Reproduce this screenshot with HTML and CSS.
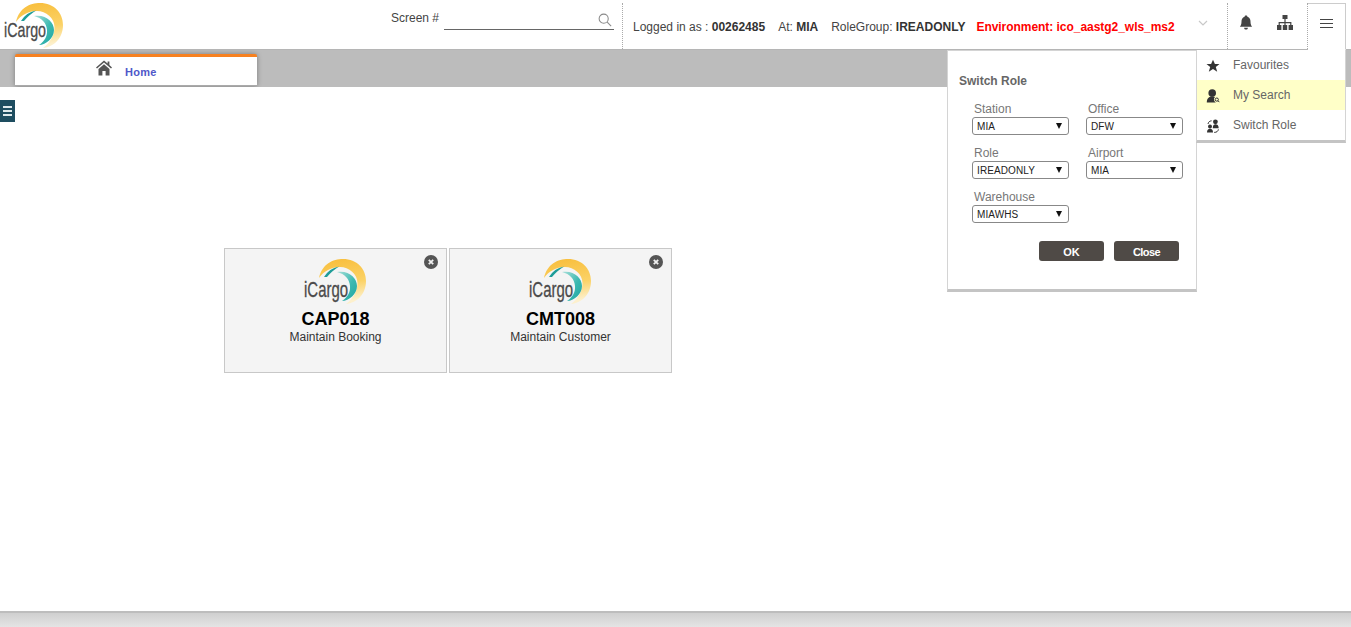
FILE: index.html
```html
<!DOCTYPE html>
<html lang="en">
<head>
<meta charset="utf-8">
<title>iCargo</title>
<link rel="stylesheet" href="styles.css">
</head>
<body>
<svg class="defs" width="0" height="0" aria-hidden="true">
  <defs>
    <linearGradient id="sunGrad" x1="0" y1="0" x2="0.15" y2="1">
      <stop offset="0" stop-color="#f8bd3a"/>
      <stop offset=".6" stop-color="#fbd266"/>
      <stop offset="1" stop-color="#fdf0cc"/>
    </linearGradient>
    <linearGradient id="tealGrad" x1="0" y1="0" x2="1" y2="1">
      <stop offset="0" stop-color="#a9e0da"/>
      <stop offset=".55" stop-color="#3cb9b1"/>
      <stop offset="1" stop-color="#1fa5a0"/>
    </linearGradient>
    <symbol id="logoMark" viewBox="14 2 50 47">
      <path fill="url(#sunGrad)" d="M16 22C19 8 30 3 40 3C54 3 63 13 63 25C63 38 54 47 43 48C51 42 54.500 34 54.500 27C54.500 18 46 11 37 11C28 11 21 15 16 22Z"/>
      <path fill="#1f9d98" d="M21 21C25 15 29 12 36 10.500C31 14 27 17 24 21Z"/>
      <path fill="url(#tealGrad)" d="M34 16C46 14 54 22 54 30C54 38 46 45 39 45C45 41 47.500 36 47 30C46.500 23 42 18 34 16Z"/>
    </symbol>
  </defs>
</svg>
<div class="app">
  <header class="topbar">
    <div class="logo logo-top">
      <svg class="logo-mark" width="50" height="47"><use href="#logoMark"/></svg>
      <span class="logo-text">iCargo</span>
    </div>
    <div class="screen-search">
      <span class="screen-label">Screen #</span>
      <div class="screen-field">
        <svg class="search-icon" viewBox="0 0 16 16" width="14" height="14"><circle cx="6.5" cy="6.5" r="5.2"/><path d="M10.5 10.5L15 15"/></svg>
      </div>
    </div>
    <div class="user-info">
      <span>Logged in as : <b>00262485</b></span>
      <span>At: <b>MIA</b></span>
      <span>RoleGroup: <b>IREADONLY</b></span>
      <span class="env">Environment: ico_aastg2_wls_ms2</span>
    </div>
    <svg class="chevron" viewBox="0 0 10 6" width="10" height="6"><path d="M1 1L5 5L9 1"/></svg>
    <div class="tools">
      <button class="tool tool-bell" aria-label="Notifications">
        <svg viewBox="0 0 14 16" width="14" height="15"><path d="M7 0.5C8 .5 8.5 1 8.5 1.8C11 2.6 11.8 4.6 11.8 7C11.8 10 12.4 11 13.5 12.5H.5C1.6 11 2.2 10 2.2 7C2.2 4.6 3 2.6 5.5 1.8C5.5 1 6 .5 7 .5Z"/><path d="M5 13.5H9C9 15 8 15.5 7 15.5C6 15.5 5 15 5 13.5Z"/></svg>
      </button>
      <button class="tool tool-org" aria-label="Organisation">
        <svg viewBox="0 0 16 15" width="16" height="15"><rect x="5.5" y="0" width="5" height="4"/><rect x="0" y="10" width="4.4" height="5"/><rect x="5.8" y="10" width="4.4" height="5"/><rect x="11.6" y="10" width="4.4" height="5"/><path d="M7.4 4H8.6V7H14.4V10H13.2V8.2H8.6V10H7.4V8.2H2.8V10H1.6V7H7.4Z"/></svg>
      </button>
    </div>
    <button class="menu-toggle" aria-label="Menu"><span></span><span></span><span></span></button>
  </header>

  <nav class="tabstrip">
    <div class="tab">
      <svg class="home-icon" viewBox="0 0 16 15" width="16" height="16"><path d="M8 0L11.6 3V1H13.4V4.6L16 7L15 8L8 2L1 8L0 7Z"/><path d="M2.5 8.4L8 3.7L13.5 8.4V15H9.6V10.4H6.4V15H2.5Z"/></svg>
      <span class="tab-label">Home</span>
    </div>
  </nav>

  <main class="content">
    <button class="side-toggle" aria-label="Open sidebar"><span></span><span></span><span></span></button>
    <section class="cards">
      <article class="card">
        <span class="card-close">
          <svg viewBox="0 0 14 14" width="14" height="14"><circle cx="7" cy="7" r="7"/><path d="M4.8 4.8L9.2 9.2M9.2 4.8L4.8 9.2"/></svg>
        </span>
        <div class="logo logo-card">
          <svg class="logo-mark" width="50" height="47"><use href="#logoMark"/></svg>
          <span class="logo-text">iCargo</span>
        </div>
        <h2 class="card-code">CAP018</h2>
        <p class="card-name">Maintain Booking</p>
      </article>
      <article class="card">
        <span class="card-close">
          <svg viewBox="0 0 14 14" width="14" height="14"><circle cx="7" cy="7" r="7"/><path d="M4.8 4.8L9.2 9.2M9.2 4.8L4.8 9.2"/></svg>
        </span>
        <div class="logo logo-card">
          <svg class="logo-mark" width="50" height="47"><use href="#logoMark"/></svg>
          <span class="logo-text">iCargo</span>
        </div>
        <h2 class="card-code">CMT008</h2>
        <p class="card-name">Maintain Customer</p>
      </article>
    </section>
  </main>

  <aside class="role-panel">
    <h3 class="role-title">Switch Role</h3>
    <div class="role-grid">
      <div class="field"><label>Station</label><div class="select"><span>MIA</span><i></i></div></div>
      <div class="field"><label>Office</label><div class="select"><span>DFW</span><i></i></div></div>
      <div class="field"><label>Role</label><div class="select"><span>IREADONLY</span><i></i></div></div>
      <div class="field"><label>Airport</label><div class="select"><span>MIA</span><i></i></div></div>
      <div class="field"><label>Warehouse</label><div class="select"><span>MIAWHS</span><i></i></div></div>
    </div>
    <div class="role-actions">
      <button class="btn">OK</button>
      <button class="btn btn-close">Close</button>
    </div>
  </aside>

  <aside class="drop-menu">
    <div class="drop-item">
      <svg viewBox="0 0 14 14" width="14" height="14"><path d="M7 .8L8.9 5H13.5L9.8 8L11.2 12.8L7 10L2.8 12.8L4.2 8L.5 5H5.1Z"/></svg>
      <span>Favourites</span>
    </div>
    <div class="drop-item active">
      <svg viewBox="0 0 14 14" width="14" height="14"><circle cx="6.2" cy="4" r="3.8"/><path d="M.8 13.4C.8 9.5 3 7.2 6.2 7.2C7.2 7.2 8.2 7.4 9 7.9C7.4 9.4 7.6 12.2 9.8 13.4Z"/><circle class="lens" cx="10.8" cy="10.6" r="1.6"/><path class="lens" d="M12 11.8L13.4 13.2"/></svg>
      <span>My Search</span>
    </div>
    <div class="drop-item">
      <svg viewBox="0 0 14 14" width="14" height="14"><circle cx="9.4" cy="2.8" r="2.4"/><path d="M6.8 8.6C6.8 6.4 8 5.2 9.4 5.2C11.2 5.2 12.6 6.4 12.6 8.6V9.2H6.8Z"/><circle cx="4" cy="7.4" r="2"/><path d="M1 13.6C1 11 2.2 9.8 4 9.8C5.8 9.8 7 11 7 13.6Z"/><path class="swap" d="M2 5C2.4 3 3.600 2 5.600 1.800M12.400 10.400C12 12.400 10.600 13.400 8.200 13.400"/></svg>
      <span>Switch Role</span>
    </div>
  </aside>

  <footer class="footer"></footer>
</div>
</body>
</html>
```
FILE: styles.css
```css
* { box-sizing: border-box; }
html, body { margin: 0; height: 100%; }
body { font-family: "Liberation Sans", Arial, sans-serif; color: #333; background: #fff; overflow: hidden; }
button { font-family: inherit; padding: 0; border: 0; background: none; }
.defs { position: absolute; }

.app { position: relative; width: 1351px; height: 627px; display: flex; flex-direction: column; }

/* header */
.topbar { height: 50px; flex: none; display: flex; align-items: stretch; background: #fff; border-bottom: 1px solid #b5b5b5; position: relative; }

.logo { position: relative; flex: none; }
.logo-mark { position: absolute; display: block; }
.logo-text { position: absolute; color: #4a4a4a; transform-origin: left top; transform: scaleX(.68); -webkit-text-stroke: .3px #4a4a4a; }
.logo-top { width: 391px; height: 49px; }
.logo-top .logo-mark { left: 14px; top: 2px; }
.logo-top .logo-text { left: 4px; top: 18px; font-size: 21px; }

.screen-search { width: 232px; flex: none; display: flex; align-items: flex-start; border-right: 1px dotted #aaa; margin: 3px 0 0; }
.screen-label { font-size: 12px; color: #444; margin: 8px 5px 0 0; }
.screen-field { width: 170px; height: 27px; border-bottom: 1px solid #666; position: relative; }
.search-icon { position: absolute; right: 2px; top: 10px; fill: none; stroke: #8a8a8a; stroke-width: 1.2; }

.user-info { display: flex; width: 575px; flex: none; gap: 13px; font-size: 12px; padding: 20px 0 0 10px; color: #444; white-space: nowrap; }
.user-info b { color: #333; }
.env { color: #f00; font-weight: 700; letter-spacing: -.04px; margin-left: -2px; }

.chevron { flex: none; margin: 20px 19px 0 0; fill: none; stroke: #c8c8c8; stroke-width: 1.2; }
.tools { width: 81px; display: flex; border-left: 1px dotted #aaa; border-right: 1px dotted #aaa; margin-top: 3px; flex: none; }
.tool { height: 38px; display: flex; align-items: center; justify-content: center; }
.tool-bell { width: 35px; }
.tool-org { width: 44px; }
.tool svg { fill: #444; }
.menu-toggle { width: 38px; height: 47px; margin-top: 3px; background: #fff; border: 1px solid #ccc; border-left-width: 0; border-bottom-color: #fff; display: flex; flex-direction: column; align-items: center; gap: 3px; padding-top: 15px; flex: none; z-index: 3; }
.menu-toggle span { width: 13px; height: 1px; background: #444; }

/* tabs */
.tabstrip { height: 37px; flex: none; background: #bcbcbc; padding: 4px 0 0 15px; }
.tab { width: 242px; height: 32px; background: #fff; border-top: 3px solid #f78120; border-bottom: 1px solid #aaa; box-shadow: 0 0 5px rgba(0,0,0,.35); display: flex; align-items: flex-start; padding: 3px 0 0 81px; border-radius: 2px 2px 0 0; }
.home-icon { fill: #555; flex: none; }
.tab-label { font-size: 11px; font-weight: 700; color: #4f58c9; margin: 6px 0 0 13px; letter-spacing: .3px; }

/* content */
.content { flex: 1; position: relative; background: #fff; }
.side-toggle { position: absolute; left: 0; top: 13px; width: 15px; height: 22px; background: #1e4d60; display: flex; flex-direction: column; align-items: center; justify-content: center; gap: 2px; }
.side-toggle span { width: 9px; height: 2px; background: #dfe9ec; }

.cards { display: flex; gap: 2px; padding: 161px 0 0 224px; }
.card { position: relative; width: 223px; height: 125px; background: #f4f4f4; border: 1px solid #c8c8c8; text-align: center; padding-top: 10px; }
.logo-card { width: 80px; height: 50px; margin: 0 auto; }
.logo-card .logo-mark { left: 21px; top: -1px; }
.logo-card .logo-text { left: 8px; top: 18px; font-size: 22px; }
.card-close { position: absolute; right: 8px; top: 6px; width: 14px; height: 14px; }
.card-close svg { display: block; fill: #555; stroke: none; }
.card-close path { stroke: #f0f0f0; stroke-width: 1.8; }
.card-code { margin: 0; font-size: 18px; line-height: 20px; font-weight: 700; color: #000; }
.card-name { margin: 0; font-size: 12px; line-height: 16px; color: #333; }

/* role panel */
.role-panel { position: absolute; left: 947px; top: 50px; width: 250px; height: 242px; background: #fff; border: 1px solid #d4d4d4; border-bottom: 3px solid #c4c4c4; padding: 23px 0 0 11px; z-index: 2; }
.role-title { margin: 0 0 14px; font-size: 12px; line-height: 14px; font-weight: 700; color: #666; }
.role-grid { display: grid; grid-template-columns: 97px 97px; column-gap: 17px; row-gap: 11px; margin-left: 13px; }
.field label { display: block; font-size: 12px; line-height: 14px; color: #777; padding-left: 2px; margin-bottom: 1px; }
.select { width: 97px; height: 18px; border: 1px solid #888; border-radius: 3px; display: flex; align-items: center; justify-content: space-between; padding: 0 6px 0 4px; font-size: 10px; letter-spacing: .1px; color: #222; }
.select span { padding-top: 1px; }
.select i { width: 0; height: 0; border-left: 3.5px solid transparent; border-right: 3.5px solid transparent; border-top: 6px solid #111; }
.role-actions { position: absolute; right: 17px; top: 190px; display: flex; gap: 10px; }
.btn { width: 65px; height: 20px; background: #4f4a46; color: #fff; font-size: 11px; font-weight: 700; border-radius: 3px; padding-top: 1px; }
.btn-close { letter-spacing: -.6px; }

/* dropdown */
.drop-menu { position: absolute; left: 1196px; top: 50px; width: 150px; height: 93px; background: #fff; border: 1px solid #d4d4d4; border-top: 0; border-bottom: 3px solid #c4c4c4; z-index: 2; display: flex; flex-direction: column; }
.drop-item { height: 30px; flex: none; display: flex; align-items: center; gap: 13px; padding-left: 9px; font-size: 12px; color: #666; }
.drop-item svg { fill: #333; flex: none; margin-top: 2px; }
.drop-item.active { background: #ffffc8; }
.lens { fill: none; stroke: #333; stroke-width: 1; }
.swap { fill: none; stroke: #333; stroke-width: 1; }

/* footer */
.footer { height: 16px; flex: none; border-top: 2px solid #bdbdbd; background: linear-gradient(#cfcfcf, #e4e4e4); }
```
